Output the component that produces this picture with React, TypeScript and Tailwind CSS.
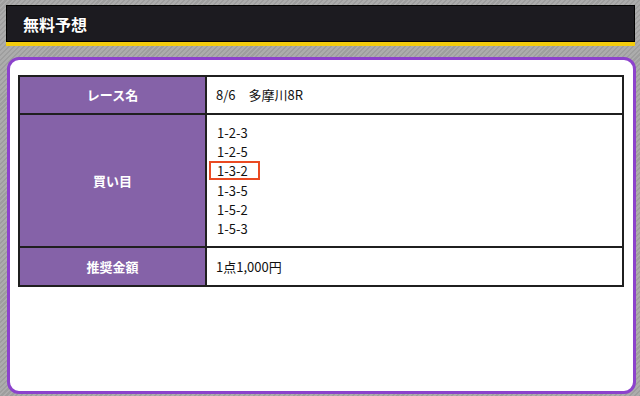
export default function App() {
  const picks = ["1-2-3", "1-2-5", "1-3-2", "1-3-5", "1-5-2", "1-5-3"];
  return (
    <div
      className="h-[396px] w-[640px] overflow-hidden pl-[6px] pr-[5px] pt-[5px] bg-[repeating-linear-gradient(135deg,#9e9e9e_0px,#9e9e9e_1.5px,#acacac_1.5px,#acacac_3.5px)]"
      style={{ fontFamily: '"Noto Sans CJK JP", "Noto Sans", sans-serif' }}
    >
      <div className="flex h-[37px] items-center border border-black bg-[#1c1b20] pl-[16px]">
        <span className="text-[16px] font-bold leading-none text-white [text-shadow:0_0_2px_rgba(0,0,0,0.8)]">無料予想</span>
      </div>
      <div className="h-[4px] bg-[#f3cc0c]" />
      <div className="ml-[1px] mt-[11px] h-[337px] w-[629px] rounded-[12px] border-[3px] border-[#8c42cc] bg-white pl-[8px] pr-[9px] pt-[15px]">
        <div className="grid grid-cols-[185px_1fr] gap-[2px] border-2 border-[#1f1f1f] bg-[#1f1f1f] text-[13px]">
          <div className="flex h-[36px] items-center justify-center bg-[#8562a8] font-bold text-white">レース名</div>
          <div className="flex h-[36px] items-center bg-white pl-[9px] text-[#111]">8/6　多摩川8R</div>
          <div className="flex h-[131px] items-center justify-center bg-[#8562a8] font-bold text-white">買い目</div>
          <div className="flex h-[131px] flex-col justify-center bg-white pl-[10px] text-[#111]">
            {picks.map((p) => (
              <div key={p} className="relative h-[19.2px] leading-[19.2px]">
                {p}
                {p === "1-3-2" && (
                  <span className="absolute left-[-8px] top-0 h-[19px] w-[51px] border-2 border-[#ea4a22]" />
                )}
              </div>
            ))}
          </div>
          <div className="flex h-[37px] items-center justify-center bg-[#8562a8] font-bold text-white">推奨金額</div>
          <div className="flex h-[37px] items-center bg-white pl-[9px] text-[#111]">1点1,000円</div>
        </div>
      </div>
    </div>
  );
}
